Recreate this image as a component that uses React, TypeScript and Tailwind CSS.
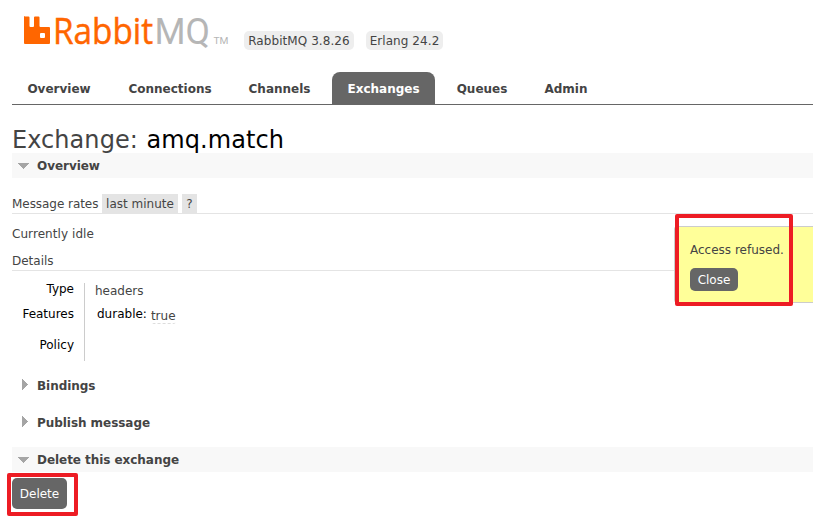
import clsx from "clsx";

const TABS = [
  { label: "Overview", width: "w-[94px]" },
  { label: "Connections", width: "w-[114px]" },
  { label: "Channels", width: "w-[93px]" },
  { label: "Exchanges", width: "w-[103px]" },
  { label: "Queues", width: "w-[82px]" },
  { label: "Admin", width: "w-[74px]" },
];

function Logo() {
  return (
    <svg width="208" height="64" viewBox="24 0 208 64" className="block shrink-0">
      <path
        fill="#ff6600"
        d="M25 16.500h3.500q1 0 1 1v8.500q0 1 1 1h2.500q1 0 1-1v-8.500q0-1 1-1h3.500q1 0 1 1v8.500q0 1 1 1h8.500q1 0 1 1v15q0 1-1 1H25q-1 0-1-1v-26q0-1 1-1zM41 33q-1 0-1 1v3q0 1 1 1h3q1 0 1-1v-3q0-1-1-1z"
        fillRule="evenodd"
      />
      <text
        x="53"
        y="43.700"
        fontSize="36"
        fill="#ff6600"
        stroke="#ff6600"
        strokeWidth="0.500"
        textLength="100"
        lengthAdjust="spacingAndGlyphs"
        className="font-['Open_Sans',sans-serif]"
      >
        Rabbit
      </text>
      <g fill="#b6b6b6" className="font-['Roboto',sans-serif]">
        <text x="154.500" y="43.700" fontSize="37.500" textLength="55.500" lengthAdjust="spacingAndGlyphs">
          MQ
        </text>
        <text x="213.500" y="44" fontSize="9" textLength="15" lengthAdjust="spacingAndGlyphs">
          TM
        </text>
      </g>
    </svg>
  );
}

function Section({ title, open = false }: { title: string; open?: boolean }) {
  return (
    <h2
      className={clsx(
        "flex h-[25px] items-center text-[12px] font-bold tracking-[-0.05px]",
        open && "bg-[#f8f8f8]"
      )}
    >
      <svg width="25" height="25" viewBox="0 0 25 25" fill="#a5a5a5" shapeRendering="crispEdges">
        {open ? <path d="M6 10h11l-5.500 6z" /> : <path d="M10 6v11l6-5.500z" />}
      </svg>
      {title}
    </h2>
  );
}

function Button({ label, className }: { label: string; className?: string }) {
  return (
    <button className={clsx("flex items-center justify-center rounded-[5px] bg-[#666] text-[12px] text-white", className)}>
      {label}
    </button>
  );
}

export default function App() {
  return (
    <div className="relative h-[520px] w-[813px] overflow-hidden bg-white pl-3 font-['Verdana','DejaVu_Sans',sans-serif] text-[12px] leading-4 text-[#444]">
      <header className="flex h-[72px] pl-3">
        <Logo />
        <div className="mt-[31px] ml-3 flex gap-3">
          <span className="flex h-[19px] w-[110px] items-center justify-center rounded-[5px] bg-[#eee] tracking-[0.07px]">
            RabbitMQ 3.8.26
          </span>
          <span className="flex h-[19px] w-[77px] items-center justify-center rounded-[5px] bg-[#eee] tracking-[0.07px]">
            Erlang 24.2
          </span>
        </div>
      </header>

      <nav className="flex h-[33px] gap-1.5 border-b border-[#666]">
        {TABS.map(({ label, width }) => (
          <a
            key={label}
            className={clsx(
              "flex h-8 shrink-0 items-center justify-center rounded-t-lg pt-px font-bold",
              width,
              label === "Overview" && "mr-px",
              label === "Exchanges" && "bg-[#666] text-white"
            )}
          >
            {label}
          </a>
        ))}
      </nav>

      <h1 className="h-12 pt-[19px] text-[24px] leading-[32px] tracking-[0.06px]">
        Exchange: <b className="ml-px font-normal text-black">amq.match</b>
      </h1>

      <Section title="Overview" open />
      <div className="mt-4 flex h-5 items-start gap-1 border-b border-[#e4e4e4]">
        <span className="w-[86px] pt-0.5 tracking-[-0.05px] whitespace-nowrap">Message rates</span>
        <span className="h-[19px] w-[76px] bg-[#e4e4e4] pt-0.5 text-center">last minute</span>
        <span className="h-[19px] w-[15px] bg-[#e4e4e4] pt-0.5 text-center">?</span>
      </div>
      <p className="mt-3 tracking-[0.07px]">Currently idle</p>
      <h3 className="mt-[11px] h-[18px] border-b border-[#e4e4e4]">Details</h3>

      <div className="mt-3 flex h-[78px]">
        <div className="w-[73px] border-r border-[#ccc] pr-[10px] text-right text-black">
          <p className="-mt-0.5">Type</p>
          <p className="mt-[9px]">Features</p>
          <p className="mt-[15px]">Policy</p>
        </div>
        <div className="pl-[10px]">
          <p>headers</p>
          <p className="mt-[7px] flex gap-1 pl-0.5">
            <span className="text-black">durable:</span>
            <span className="mt-0.5 h-4 rounded-[3px] border-b border-dashed border-[#ddd]">true</span>
          </p>
        </div>
      </div>

      <div className="mt-3 flex flex-col gap-3">
        <Section title="Bindings" />
        <Section title="Publish message" />
        <Section title="Delete this exchange" open />
      </div>
      <Button label="Delete" className="mt-1.5 h-[31px] w-[55px]" />

      <div className="absolute top-[226px] left-[674px] h-[77px] w-[160px] rounded-[3px] border border-[#ccc] bg-[#ffff99] pt-[15px] pl-[15px]">
        <p>Access refused.</p>
        <Button label="Close" className="mt-[10px] h-[23px] w-12" />
      </div>

      <div className="absolute top-[214px] left-[675px] h-[92px] w-[118px] rounded-[2px] border-4 border-[#ed1c24]" />
      <div className="absolute top-[473px] left-[7px] h-[43px] w-[71px] rounded-[2px] border-4 border-[#ed1c24]" />
    </div>
  );
}
